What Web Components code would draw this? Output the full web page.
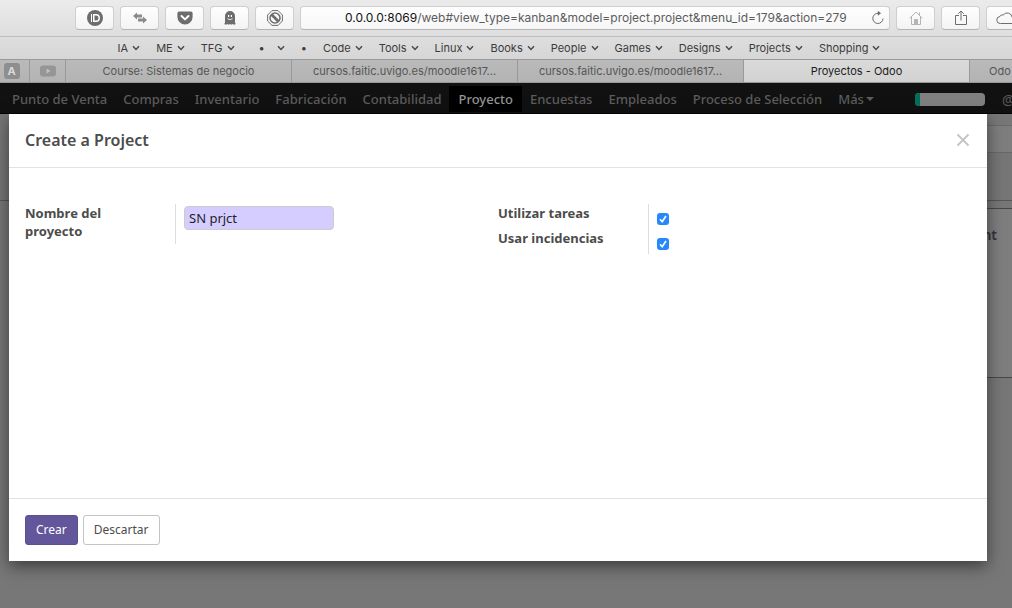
<!DOCTYPE html>
<html lang="es">
<head>
<meta charset="utf-8">
<title>Proyectos - Odoo</title>
<style>
html, body { margin: 0; height: 100%; }
body { overflow: hidden; }
</style>
</head>
<body>
<browser-window></browser-window>

<script>
const define = (name, html, setup) => {
  const template = document.createElement('template');
  template.innerHTML = `<style>*{box-sizing:border-box}:host([hidden]){display:none}</style>${html}`;
  customElements.define(name, class extends HTMLElement {
    constructor() {
      super();
      this.attachShadow({ mode: 'open' }).append(template.content.cloneNode(true));
    }
    connectedCallback() {
      if (setup) setup(this, this.shadowRoot);
    }
  });
};

define('tool-button', `
<style>
:host { display: block; flex: none; width: 39px; height: 24px; }
button { display: flex; align-items: center; justify-content: center; width: 100%; height: 100%; padding: 0;
  border: 1px solid #cfcfcf; border-bottom-color: #b4b4b4; border-radius: 4px; background: linear-gradient(#fefefe, #f3f3f3); color: #6d6d6d; }
</style>
<button type="button"><slot></slot></button>`, (host, root) => {
  root.querySelector('button').setAttribute('aria-label', host.getAttribute('label'));
});

define('address-bar', `
<style>
:host { display: flex; flex: 1; min-width: 0; height: 24px; align-items: center; padding: 0 4px 0 44px;
  border: 1px solid #cfcfcf; border-bottom-color: #b4b4b4; border-radius: 4px; background: linear-gradient(#fefefe, #f6f6f6); }
a { flex: 1; min-width: 0; overflow: hidden; white-space: nowrap; font-size: 12px; line-height: 16px; color: #5c5c5c; text-decoration: none; }
b { font-weight: 400; color: #111; }
button { flex: none; width: 14px; height: 16px; padding: 0; border: 0; background: none; }
svg { display: block; }
</style>
<a href="#view_type=kanban"><b>0.0.0.0:8069</b>/web#view_type=kanban&amp;model=project.project&amp;menu_id=179&amp;action=279</a>
<button type="button" aria-label="Reload"><svg width="14" height="16" viewBox="0 0 14 16" fill="none" stroke="#6a6a6a"><path d="M12 8.600A5.100 5.100 0 1 1 7.200 3.300"/><path d="M6.800.8 10 3.300 6.800 5.800z" fill="#6a6a6a" stroke="none"/></svg></button>`);

define('bookmark-link', `
<style>
:host { display: block; flex: none; }
a { display: flex; align-items: center; gap: 4px; font-size: 11px; line-height: 16px; color: #3c3c3c; text-decoration: none; }
svg { display: block; }
:host([plain]) svg { display: none; }
:host([dot]) a { gap: 12px; padding-left: 8px; }
</style>
<a href="#"><slot></slot><svg width="8" height="6" viewBox="0 0 8 6" fill="none" stroke="#4a4a4a" stroke-width="1.500"><path d="M1 1.200 4 4.400 7 1.200"/></svg></a>`);

define('browser-tab', `
<style>
:host { display: block; flex: 0 0 226px; height: 100%; border-right: 1px solid #999; background: linear-gradient(#bababa, #b3b3b3); color: #555; }
:host([active]) { background: linear-gradient(#dadada, #d2d2d2); color: #1c1c1c; }
:host([pin]) { flex-basis: 36px; }
:host([pin="first"]) { flex-basis: 30px; }
:host([pin="first"]) a { padding: 0 6px 0 0; }
a { display: flex; align-items: center; justify-content: center; height: 100%; padding: 0; font-size: 11px; white-space: nowrap; color: inherit; text-decoration: none; }
:host([start]) a { justify-content: flex-start; padding-left: 19px; }
</style>
<a href="#"><slot></slot></a>`);

define('browser-chrome', `
<style>
:host { display: block; overflow: hidden; font-family: Inter, "Liberation Sans", sans-serif; }
.tools { display: flex; gap: 6px; height: 37px; padding: 6px 0 0 75px; margin-right: -13px; border-bottom: 1px solid #bfbfbf; background: linear-gradient(#ebebeb, #dedede); }
.bookmarks { display: flex; align-items: center; justify-content: center; gap: 16px; height: 22px; padding-right: 14px; background: linear-gradient(#dedede, #d6d6d6); }
.tabs { display: flex; height: 24px; border-top: 1px solid #999; border-bottom: 1px solid #999; overflow: hidden; background: #b6b6b6; }
svg { display: block; }
.letter { display: block; width: 16px; height: 16px; border-radius: 3px; background: #8e8e8e; color: #d9d9d9; font-size: 11px; font-weight: 700; line-height: 16px; text-align: center; }
</style>
<div class="tools">
  <tool-button label="Password manager"><svg width="16" height="16" viewBox="0 0 16 16"><circle cx="8" cy="8" r="8" fill="#6d6d6d"/><path d="M4 4h1v8H4z" fill="#fff"/><path d="M6 4h3a4 4 0 0 1 0 8H6z" fill="#fff"/><path d="M7.500 5.500H9a2.500 2.500 0 0 1 0 5H7.500z" fill="#6d6d6d"/></svg></tool-button>
  <tool-button label="Switch"><svg width="14" height="12" viewBox="0 0 14 12" fill="#8a8a8a"><path d="M0 4 4 .5v2h5v3H4v2zM14 8l-4-3.500v2H5v3h5v2z"/></svg></tool-button>
  <tool-button label="Save to Pocket"><svg width="16" height="14" viewBox="0 0 16 14"><path d="M2 .5h12A1.700 1.700 0 0 1 15.600 2v4a7.600 7.600 0 0 1-15.200 0V2A1.700 1.700 0 0 1 2 .5z" fill="#6d6d6d"/><path d="m4.500 5 3.500 3.400L11.500 5" fill="none" stroke="#fff" stroke-width="2" stroke-linecap="round" stroke-linejoin="round"/></svg></tool-button>
  <tool-button label="Tracker blocking"><svg width="12" height="14" viewBox="0 0 12 14"><path d="M1 12V5a5 5 0 0 1 10 0v7l1 1-2 .7-1.500-.7-1.200.7L6 13l-1.300.7L3.500 13l-1.500.7L0 13z" fill="#6d6d6d"/><path d="M4 4h1.200v2H4zM6.800 4H8v2H6.800z" fill="#fff"/><path d="M3.500 7.700q2.500 2 5 0" fill="none" stroke="#fff" stroke-width=".8"/></svg></tool-button>
  <tool-button label="Content blocker"><svg width="16" height="16" viewBox="0 0 16 16" fill="none" stroke="#6d6d6d"><path d="M5 .6h6L15.400 5v6L11 15.400H5L.6 11V5z"/><circle cx="8" cy="8" r="5" stroke-width="1.500"/><path d="m4.500 4.500 7 7" stroke-width="2.800"/></svg></tool-button>
  <address-bar></address-bar>
  <tool-button label="Home"><svg width="14" height="14" viewBox="0 0 14 14" fill="none" stroke="#b4b4b4"><path d="M.7 7.300 7 1l6.300 6.300M2.500 6v7.500h9V6M10.500 4V1.500"/><path d="M5.500 13V8.500h3V13z" fill="#b4b4b4"/></svg></tool-button>
  <tool-button label="Share"><svg width="12" height="16" viewBox="0 0 12 16" fill="none" stroke="#6d6d6d"><path d="M4 5.500H.5v9h11v-9H8M6 10.500V1M3.300 3.700 6 1l2.700 2.700"/></svg></tool-button>
  <tool-button label="iCloud"><svg width="20" height="14" viewBox="0 0 20 14" fill="none" stroke="#6d6d6d"><path d="M4.500 12.500a3.500 3.500 0 0 1-.5-7 2.500 2.500 0 0 1 3.200-1.500 5 5 0 0 1 9 2.500 3 3 0 0 1 0 6z"/></svg></tool-button>
</div>
<div class="bookmarks">
  <bookmark-link>IA</bookmark-link><bookmark-link>ME</bookmark-link><bookmark-link>TFG</bookmark-link>
  <bookmark-link dot>•</bookmark-link><bookmark-link plain>•</bookmark-link>
  <bookmark-link>Code</bookmark-link><bookmark-link>Tools</bookmark-link><bookmark-link>Linux</bookmark-link>
  <bookmark-link>Books</bookmark-link><bookmark-link>People</bookmark-link><bookmark-link>Games</bookmark-link>
  <bookmark-link>Designs</bookmark-link><bookmark-link>Projects</bookmark-link><bookmark-link>Shopping</bookmark-link>
</div>
<div class="tabs">
  <browser-tab pin="first"><span class="letter">A</span></browser-tab>
  <browser-tab pin><svg width="16" height="12" viewBox="0 0 16 12"><rect width="16" height="11" y=".5" rx="3" fill="#969696"/><path d="m6.500 3.500 4 2.500-4 2.500z" fill="#c0c0c0"/></svg></browser-tab>
  <browser-tab>Course: Sistemas de negocio</browser-tab>
  <browser-tab>cursos.faitic.uvigo.es/moodle1617...</browser-tab>
  <browser-tab>cursos.faitic.uvigo.es/moodle1617...</browser-tab>
  <browser-tab active>Proyectos - Odoo</browser-tab>
  <browser-tab start>Odo</browser-tab>
</div>`);

define('menu-item', `
<style>
:host { display: block; flex: none; }
a { display: flex; align-items: center; gap: 2px; height: 26px; padding: 0 8px; font-size: 13px; font-weight: 500; color: #5c5c5c; text-decoration: none; white-space: nowrap; }
:host([active]) a { padding: 0 9px; background: #000; color: #959595; }
i { display: none; border: 4px solid transparent; border-top-color: #5c5c5c; border-bottom: 0; }
:host([more]) i { display: block; }
</style>
<a href="#"><slot></slot><i></i></a>`);

define('app-menu', `
<style>
:host { display: flex; align-items: center; height: 31px; padding: 2px 0 0 4px; overflow: hidden; background: #111; border-bottom: 1px solid #050505; }
nav { display: flex; flex: none; }
.progress { flex: none; width: 70px; height: 13px; margin-left: 33px; border-radius: 4px; overflow: hidden; background: #808080; }
.progress span { display: block; width: 5px; height: 100%; background: #00705a; }
.at { margin-left: 17px; font-size: 14px; color: #5a5a5a; }
</style>
<nav>
  <menu-item>Punto de Venta</menu-item><menu-item>Compras</menu-item><menu-item>Inventario</menu-item>
  <menu-item>Fabricación</menu-item><menu-item>Contabilidad</menu-item><menu-item active>Proyecto</menu-item>
  <menu-item>Encuestas</menu-item><menu-item>Empleados</menu-item><menu-item>Proceso de Selección</menu-item>
  <menu-item more>Más</menu-item>
</nav>
<div class="progress" role="progressbar" aria-label="Planner"><span></span></div>
<span class="at">@</span>`);

define('dimmed-page', `
<style>
:host { display: flex; flex-direction: column; height: 100%; background: #777; color: #33333f; }
.gap { height: 11px; }
.head { height: 28px; margin-left: 16px; border: 1px solid #696969; border-width: 1px 0; background: #7e7e7e; }
.panel { height: 48px; border-bottom: 1px solid #565656; background: #767676; }
.space { height: 7px; }
.card { display: flex; justify-content: flex-end; height: 170px; margin-left: 16px; padding: 16px 15px 0 0; border: 1px solid #484848; border-width: 1px 0; background: #7e7e7e; font-size: 14px; font-weight: 600; line-height: 20px; }
</style>
<div class="gap"></div><div class="head"></div><div class="panel"></div><div class="space"></div>
<div class="card">nt</div>`);

define('project-form', `
<style>
:host { display: block; font-size: 13px; line-height: 18px; color: #4c4c4c; }
form { display: grid; grid-template-columns: 1fr 1fr; align-items: start; }
.group { display: grid; grid-template-columns: 150px 1fr; }
label { padding: 0 36px 4px 0; font-weight: 700; }
.checks label { min-height: 25px; }
.field { padding: 2px 0 0 8px; border-left: 1px solid #ddd; }
.checks .field { padding-top: 9px; }
input { display: block; margin: 0; font: inherit; }
input[type=text] { width: 150px; height: 24px; padding: 0 4px; border: 1px solid #ccc; border-radius: 4px; background: #d5cdff; color: #1f1f1f; }
input[type=checkbox] { appearance: none; width: 12px; height: 12px; border-radius: 3px;
  background: #2588fb url("data:image/svg+xml,%3Csvg xmlns='http://www.w3.org/2000/svg' viewBox='0 0 12 12' fill='none' stroke='white' stroke-width='1.700'%3E%3Cpath d='M3 6.300 5.200 8.700 9 3'/%3E%3C/svg%3E"); }
</style>
<form>
  <div class="group"><label for="name">Nombre del proyecto</label><div class="field"><input id="name" type="text" value="SN prjct"></div></div>
  <div class="group checks">
    <label for="tasks">Utilizar tareas</label><div class="field"><input id="tasks" type="checkbox" checked></div>
    <label for="issues">Usar incidencias</label><div class="field"><input id="issues" type="checkbox" checked></div>
  </div>
</form>`);

define('action-button', `
<style>
:host { display: block; }
button { height: 30px; padding: 0 10px 2px; border: 1px solid #c4c4c4; border-radius: 3px; background: #fff; color: #4c4c4c; font: inherit; font-size: 12px; }
:host([primary]) button { border-color: #5d5092; background: #63569a; color: #fff; }
</style>
<button type="button"><slot></slot></button>`);

define('modal-dialog', `
<style>
:host { display: block; background: #fff; box-shadow: 0 5px 15px rgba(0, 0, 0, .5); color: #4c4c4c; }
header { display: flex; align-items: center; justify-content: space-between; height: 54px; padding: 0 17px 2px 16px; border-bottom: 1px solid #e2e2e2; }
h4 { margin: 0; font-size: 16px; line-height: 20px; font-weight: 600; }
header button { padding: 0; border: 0; background: none; }
svg { display: block; }
.body { min-height: 330px; padding: 36px 16px; }
footer { display: flex; gap: 5px; padding: 16px; border-top: 1px solid #e2e2e2; }
</style>
<header><h4><slot name="title"></slot></h4><button type="button" aria-label="Cerrar"><svg width="14" height="14" viewBox="0 0 14 14" stroke="#c4c4c4" stroke-width="1.800"><path d="m1.500 1.500 11 11M12.500 1.500l-11 11"/></svg></button></header>
<div class="body"><slot></slot></div>
<footer><slot name="actions"></slot></footer>`);

define('browser-window', `
<style>
:host { display: flex; flex-direction: column; height: 100%; font-family: "Noto Sans", "DejaVu Sans", sans-serif; }
browser-chrome, app-menu { flex: none; }
main { position: relative; flex: 1; min-height: 0; }
modal-dialog { position: absolute; top: 0; left: 9px; right: 25px; }
</style>
<browser-chrome></browser-chrome>
<app-menu></app-menu>
<main>
  <dimmed-page></dimmed-page>
  <modal-dialog role="dialog">
    <span slot="title">Create a Project</span>
    <project-form></project-form>
    <action-button slot="actions" primary>Crear</action-button>
    <action-button slot="actions">Descartar</action-button>
  </modal-dialog>
</main>`);
</script>
</body>
</html>
